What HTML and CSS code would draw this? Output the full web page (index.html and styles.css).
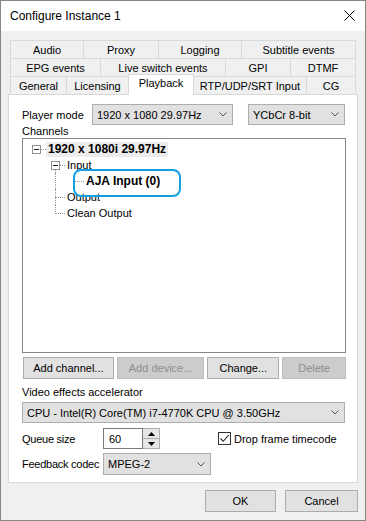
FILE: index.html
```html
<!DOCTYPE html>
<html>
<head>
<meta charset="utf-8">
<link rel="stylesheet" href="styles.css">
</head>
<body>
<div class="window">
  <div class="titlebar">
    <span class="title">Configure Instance 1</span>
    <svg class="close" width="11" height="11" viewBox="0 0 11 11"><path d="M0.5 0.5 L10.5 10.5 M10.5 0.5 L0.5 10.5" stroke="#000" stroke-width="1" fill="none"/></svg>
  </div>
  <div class="content">
    <div class="tabs">
      <div class="tabrow">
        <div class="tab t-audio">Audio</div>
        <div class="tab t-proxy">Proxy</div>
        <div class="tab t-logging">Logging</div>
        <div class="tab t-subtitle">Subtitle events</div>
      </div>
      <div class="tabrow">
        <div class="tab t-epg">EPG events</div>
        <div class="tab t-live">Live switch events</div>
        <div class="tab t-gpi">GPI</div>
        <div class="tab t-dtmf">DTMF</div>
      </div>
      <div class="tabrow">
        <div class="tab t-general">General</div>
        <div class="tab t-licensing">Licensing</div>
        <div class="tab t-playback selected">Playback</div>
        <div class="tab t-rtp">RTP/UDP/SRT Input</div>
        <div class="tab t-cg">CG</div>
      </div>
    </div>
    <div class="panel">
      <div class="row player">
        <span class="lbl-player">Player mode</span>
        <div class="combo c-mode"><span>1920 x 1080 29.97Hz</span><svg class="chev" width="8" height="5" viewBox="0 0 8 5"><path d="M0.5 0.5 L4 4 L7.5 0.5" stroke="#555" fill="none"/></svg></div>
        <div class="combo c-color"><span>YCbCr 8-bit</span><svg class="chev" width="8" height="5" viewBox="0 0 8 5"><path d="M0.5 0.5 L4 4 L7.5 0.5" stroke="#555" fill="none"/></svg></div>
      </div>
      <div class="channels-lbl">Channels</div>
      <div class="tree">
        <div class="trow">
          <span class="cell box"><span class="exp"></span></span>
          <span class="node bold sel">1920 x 1080i 29.97Hz</span>
        </div>
        <div class="trow">
          <span class="cell"></span>
          <span class="cell box down"><span class="exp"></span></span>
          <span class="node">Input</span>
        </div>
        <div class="trow">
          <span class="cell"></span>
          <span class="cell pipe"></span>
          <span class="cell ell"></span>
          <span class="node bold hl">AJA Input (0)</span>
        </div>
        <div class="trow">
          <span class="cell"></span>
          <span class="cell tee"></span>
          <span class="node">Output</span>
        </div>
        <div class="trow">
          <span class="cell"></span>
          <span class="cell ell"></span>
          <span class="node">Clean Output</span>
        </div>
      </div>
      <div class="btnrow">
        <div class="btn b-addch">Add channel...</div>
        <div class="btn b-adddev disabled">Add device...</div>
        <div class="btn b-change">Change...</div>
        <div class="btn b-delete disabled">Delete</div>
      </div>
      <div class="vlabel">Video effects accelerator</div>
      <div class="combo c-video"><span>CPU - Intel(R) Core(TM) i7-4770K CPU @ 3.50GHz</span><svg class="chev" width="8" height="5" viewBox="0 0 8 5"><path d="M0.5 0.5 L4 4 L7.5 0.5" stroke="#555" fill="none"/></svg></div>
      <div class="row queue">
        <span class="lbl-field">Queue size</span>
        <div class="spin">
          <div class="spin-edit">60</div>
          <div class="spin-btns">
            <div class="spin-btn up"><svg width="7" height="4" viewBox="0 0 7 4"><path d="M3.5 0 L7 4 L0 4 Z" fill="#000"/></svg></div>
            <div class="spin-btn"><svg width="7" height="4" viewBox="0 0 7 4"><path d="M0 0 L7 0 L3.5 4 Z" fill="#000"/></svg></div>
          </div>
        </div>
        <span class="check"><svg width="11" height="11" viewBox="0 0 11 11"><path d="M1.5 5.5 L4.2 8.3 L9.8 2" stroke="#222" stroke-width="1.1" fill="none"/></svg></span>
        <span class="check-lbl">Drop frame timecode</span>
      </div>
      <div class="row feedback">
        <span class="lbl-field">Feedback codec</span>
        <div class="combo c-codec"><span>MPEG-2</span><svg class="chev" width="8" height="5" viewBox="0 0 8 5"><path d="M0.5 0.5 L4 4 L7.5 0.5" stroke="#555" fill="none"/></svg></div>
      </div>
    </div>
    <div class="footer">
      <div class="btn b-ok">OK</div>
      <div class="btn b-cancel">Cancel</div>
    </div>
  </div>
</div>
</body>
</html>
```
FILE: styles.css
```css
* { box-sizing: border-box; }
html, body { margin: 0; padding: 0; background: #fff; }
body { font-family: "Liberation Sans", Arial, sans-serif; font-size: 11px; color: #000; }

.window {
  width: 366px;
  height: 521px;
  border: 1px solid #858585;
  background: #f0f0f0;
  overflow: hidden;
}

.titlebar {
  height: 30px;
  background: #fff;
  display: flex;
  align-items: center;
  justify-content: space-between;
  padding: 0 10px 0 9px;
}
.title { font-size: 12px; }
.close { display: block; margin-top: -1px; }

.content { padding: 9px 7px 0 7px; }

.tabs { margin-left: 2px; }
.tabrow { display: flex; height: 18px; }
.tab {
  height: 18px;
  border: 1px solid #d9d9d9;
  border-bottom: none;
  background: #f0f0f0;
  display: flex;
  align-items: center;
  justify-content: center;
  line-height: 13px;
  margin-left: -1px;
  padding-top: 1px;
}
.tab:first-child { margin-left: 0; }
.tab.selected {
  background: #fff;
  height: 21px;
  margin-top: -2px;
  margin-bottom: -1px;
  position: relative;
  z-index: 1;
  padding-top: 0;
  padding-bottom: 3px;
}
.t-audio { width: 74px; }
.t-proxy { width: 76px; }
.t-logging { width: 84px; }
.t-subtitle { width: 115px; }
.t-epg { width: 91px; }
.t-live { width: 126px; }
.t-gpi { width: 66px; }
.t-dtmf { width: 66px; }
.t-general { width: 57px; }
.t-licensing { width: 63px; }
.t-playback { width: 66px; }
.t-rtp { width: 114px; }
.t-cg { width: 50px; }

.panel {
  width: 350px;
  height: 389px;
  border: 1px solid #d9d9d9;
  background: #fff;
  padding: 9px 11px 0 13px;
}

.row { display: flex; align-items: center; }
.player { height: 21px; }
.lbl-player { width: 70px; flex: none; }

.combo {
  height: 21px;
  border: 1px solid #adadad;
  background: #e1e1e1;
  display: flex;
  align-items: center;
  justify-content: space-between;
  padding: 0 5px 0 4px;
  white-space: nowrap;
  flex: none;
}
.chev { display: block; flex: none; }
.c-mode { width: 141px; }
.c-color { width: 97px; margin-left: 15px; }
.c-video { width: 323px; }
.c-codec { width: 108px; height: 22px; }

.channels-lbl { line-height: 13px; height: 13px; }

.tree {
  width: 324px;
  height: 215px;
  border: 1px solid #828790;
  background: #fff;
  padding: 2px 0 0 4px;
}
.trow { display: flex; align-items: center; height: 16px; }
.cell {
  width: 19px;
  height: 16px;
  flex: none;
  position: relative;
  display: flex;
  align-items: center;
  justify-content: center;
}
.cell.box::after,
.cell.tee::after,
.cell.ell::after {
  content: "";
  position: absolute;
  left: 9px;
  right: 0;
  top: 8px;
  border-top: 1px dotted #9a9a9a;
}
.cell.pipe::before,
.cell.tee::before {
  content: "";
  position: absolute;
  left: 9px;
  top: 0;
  bottom: 0;
  border-left: 1px dotted #9a9a9a;
}
.cell.ell::before {
  content: "";
  position: absolute;
  left: 9px;
  top: 0;
  height: 9px;
  border-left: 1px dotted #9a9a9a;
}
.cell.down::before {
  content: "";
  position: absolute;
  left: 9px;
  top: 9px;
  bottom: 0;
  border-left: 1px dotted #9a9a9a;
}
.exp {
  width: 9px;
  height: 9px;
  border: 1px solid #919191;
  background: #fff;
  position: relative;
  z-index: 1;
  display: flex;
  align-items: center;
  justify-content: center;
}
.exp::before {
  content: "";
  width: 5px;
  height: 1px;
  background: #1e1e1e;
}
.node {
  padding: 0 2px;
  height: 15px;
  line-height: 15px;
  white-space: nowrap;
}
.node.bold { font-weight: bold; font-size: 12px; }
.node.sel { background: #ececec; }
.node.hl { position: relative; }
.node.hl::after {
  content: "";
  position: absolute;
  left: -11px;
  top: -5px;
  width: 104px;
  height: 24px;
  border: 2.5px solid #12a0e3;
  border-radius: 8px;
}

.btnrow { display: flex; margin-top: 4px; margin-left: 1px; }
.btn {
  height: 22px;
  border: 1px solid #adadad;
  background: #e1e1e1;
  display: flex;
  align-items: center;
  justify-content: center;
  white-space: nowrap;
}
.btn.disabled { background: #cccccc; border-color: #bfbfbf; color: #8d8d8d; }
.b-addch { width: 91px; }
.b-adddev { width: 88px; margin-left: 3px; }
.b-change { width: 72px; margin-left: 3px; }
.b-delete { width: 64px; margin-left: 3px; }

.vlabel { margin-top: 6px; line-height: 14px; height: 14px; margin-bottom: 3px; }

.queue { height: 21px; margin-top: 5px; }
.lbl-field { width: 81px; flex: none; letter-spacing: -0.25px; white-space: nowrap; }
.spin { display: flex; height: 21px; flex: none; }
.spin-edit {
  width: 40px;
  height: 21px;
  border: 1px solid #7a7a7a;
  background: #fff;
  padding-left: 5px;
  display: flex;
  align-items: center;
}
.spin-btns {
  width: 17px;
  height: 21px;
  display: flex;
  flex-direction: column;
  border: 1px solid #adadad;
  border-left: none;
}
.spin-btn {
  flex: 1;
  background: #e5e5e5;
  display: flex;
  align-items: center;
  justify-content: center;
}
.spin-btn.up { border-bottom: 1px solid #adadad; }
.spin-btn svg { display: block; }
.check {
  width: 13px;
  height: 13px;
  flex: none;
  border: 1px solid #333;
  background: #fff;
  margin-left: 58px;
  display: flex;
  align-items: center;
  justify-content: center;
}
.check svg { display: block; }
.check-lbl { margin-left: 3px; white-space: nowrap; }

.feedback { height: 22px; margin-top: 4px; }

.footer {
  display: flex;
  justify-content: flex-end;
  margin-top: 7px;
}
.b-ok { width: 71px; }
.b-cancel { width: 73px; margin-left: 9px; }
```
